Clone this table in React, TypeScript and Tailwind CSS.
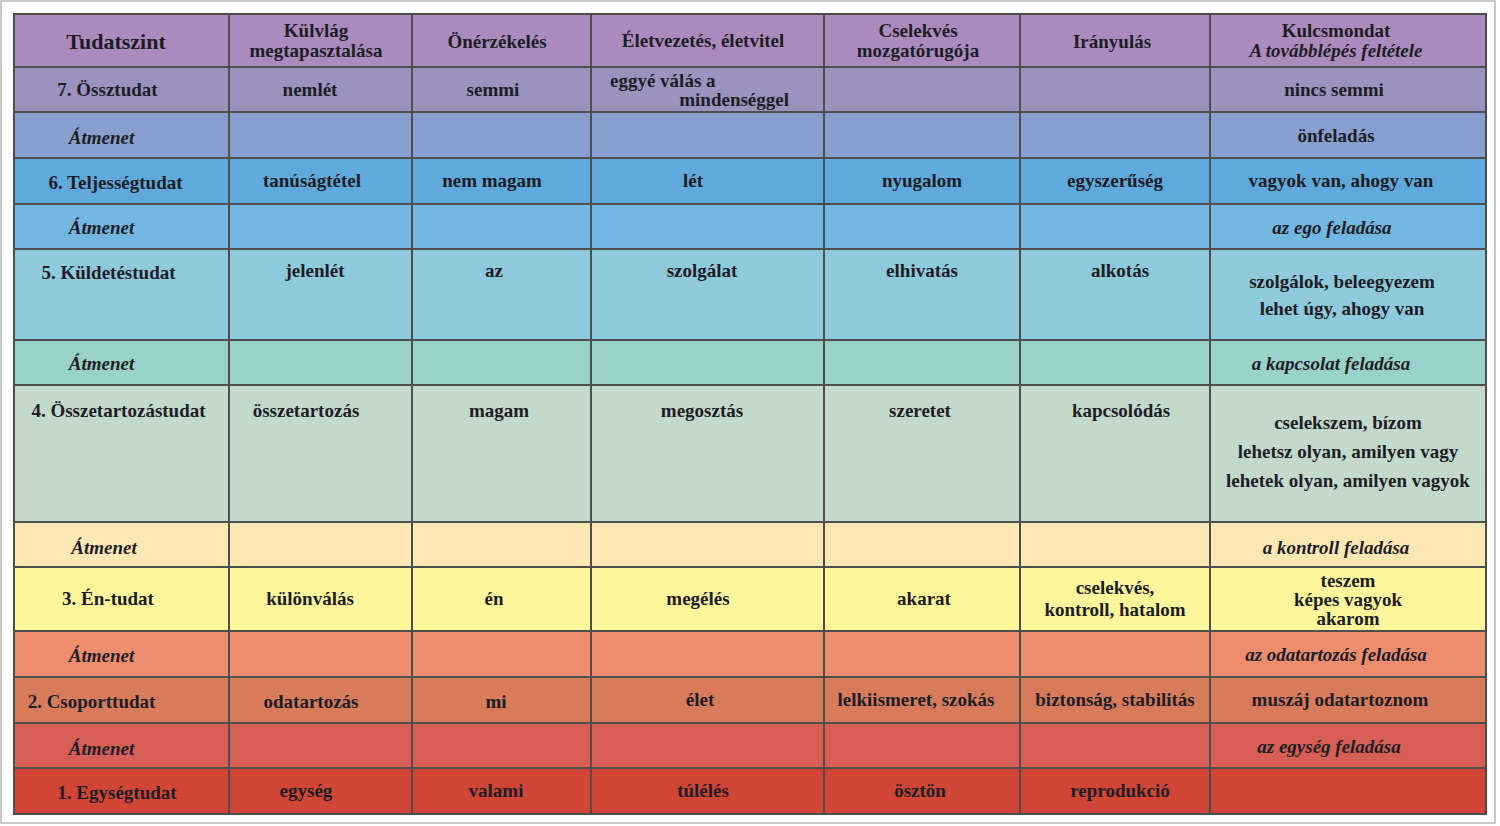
import React from "react";

type Cell = { t?: React.ReactNode; c?: string; v?: string };
type Row = { bg: string; v?: string; cells: Cell[] };

const A = (s: string) => <span className="italic">{s}</span>;

const rows: Row[] = [
  {
    bg: "bg-[#ab8bbd]",
    cells: [
      { t: "Tudatszint", c: "text-[22px] pr-[11px] pt-[2px]" },
      { t: <>Külvlág<br />megtapasztalása</>, c: "leading-[20px] pr-[9px]" },
      { t: "Önérzékelés", c: "pr-[9px] pt-[3px]" },
      { t: "Életvezetés, életvitel", c: "pr-[9px]" },
      { t: <>Cselekvés<br />mozgatórugója</>, c: "leading-[20px] pr-[8px]" },
      { t: "Irányulás", c: "pr-[6px] pt-[3px]" },
      { t: <>Kulcsmondat<br /><span className="italic">A továbblépés feltétele</span></>, c: "leading-[20px] pr-[24px]" },
    ],
  },
  {
    bg: "bg-[#9b92be]",
    cells: [
      { t: "7. Össztudat", c: "pr-[28px]" },
      { t: "nemlét", c: "pr-[21px]" },
      { t: "semmi", c: "pr-[17px]" },
      {
        t: (
          <div className="flex w-full flex-col leading-[19px]">
            <div className="pl-[18px] text-left">eggyé válás a</div>
            <div className="pr-[34px] text-right">mindenséggel</div>
          </div>
        ),
      },
      {},
      {},
      { t: "nincs semmi", c: "pr-[28px]" },
    ],
  },
  {
    bg: "bg-[#879ecf]",
    cells: [
      { t: A("Átmenet"), c: "pr-[40px] pt-[6px]" },
      {}, {}, {}, {}, {},
      { t: "önfeladás", c: "pr-[24px] pt-[2px]" },
    ],
  },
  {
    bg: "bg-[#5fa9dc]",
    cells: [
      { t: "6. Teljességtudat", c: "pr-[12px] pt-[4px]" },
      { t: "tanúságtétel", c: "pr-[17px]" },
      { t: "nem magam", c: "pr-[19px]" },
      { t: "lét", c: "pr-[29px]" },
      { t: "nyugalom" },
      { t: "egyszerűség" },
      { t: "vagyok van, ahogy van", c: "pr-[14px]" },
    ],
  },
  {
    bg: "bg-[#72b7e1]",
    cells: [
      { t: A("Átmenet"), c: "pr-[40px] pt-[2px]" },
      {}, {}, {}, {}, {},
      { t: A("az ego feladása"), c: "pr-[32px] pt-[2px]" },
    ],
  },
  {
    bg: "bg-[#8ecadc]",
    v: "justify-start pt-[10px]",
    cells: [
      { t: "5. Küldetéstudat", v: "justify-start pt-[12px]", c: "pr-[26px]" },
      { t: "jelenlét", c: "pr-[11px]" },
      { t: "az", c: "pr-[15px]" },
      { t: "szolgálat", c: "pr-[11px]" },
      { t: "elhivatás" },
      { t: "alkotás", c: "pl-[10px]" },
      { t: <>szolgálok, beleegyezem<br />lehet úgy, ahogy van</>, v: "justify-center", c: "leading-[27px] pr-[12px]" },
    ],
  },
  {
    bg: "bg-[#99d2c8]",
    cells: [
      { t: A("Átmenet"), c: "pr-[40px] pt-[3px]" },
      {}, {}, {}, {}, {},
      { t: A("a kapcsolat feladása"), c: "pr-[34px] pt-[3px]" },
    ],
  },
  {
    bg: "bg-[#c3d9cc]",
    v: "justify-start pt-[14px]",
    cells: [
      { t: "4. Összetartozástudat", c: "pr-[6px]" },
      { t: "összetartozás", c: "pr-[29px]" },
      { t: "magam", c: "pr-[5px]" },
      { t: "megosztás", c: "pr-[11px]" },
      { t: "szeretet", c: "pr-[4px]" },
      { t: "kapcsolódás", c: "pl-[12px]" },
      {
        t: <>cselekszem, bízom<br />lehetsz olyan, amilyen vagy<br />lehetek olyan, amilyen vagyok</>,
        v: "justify-center pb-[5px]",
        c: "leading-[29px]",
      },
    ],
  },
  {
    bg: "bg-[#fde8b3]",
    cells: [
      { t: A("Átmenet"), c: "pr-[35px] pt-[6px]" },
      {}, {}, {}, {}, {},
      { t: A("a kontroll feladása"), c: "pr-[24px] pt-[6px]" },
    ],
  },
  {
    bg: "bg-[#fdf69b]",
    cells: [
      { t: "3. Én-tudat", c: "pr-[27px]" },
      { t: "különválás", c: "pr-[21px]" },
      { t: "én", c: "pr-[15px]" },
      { t: "megélés", c: "pr-[19px]" },
      { t: "akarat", c: "pl-[4px]" },
      { t: <>cselekvés,<br />kontroll, hatalom</>, c: "leading-[22px]" },
      { t: <>teszem<br />képes vagyok<br />akarom</>, c: "leading-[19px]" },
    ],
  },
  {
    bg: "bg-[#ec8d6e]",
    cells: [
      { t: A("Átmenet"), c: "pr-[40px] pt-[4px]" },
      {}, {}, {}, {}, {},
      { t: A("az odatartozás feladása"), c: "pr-[24px] pt-[2px]" },
    ],
  },
  {
    bg: "bg-[#d87b5a]",
    cells: [
      { t: "2. Csoporttudat", c: "pr-[60px] pt-[4px]" },
      { t: "odatartozás", c: "pr-[19px] pt-[4px]" },
      { t: "mi", c: "pr-[11px] pt-[4px]" },
      { t: "élet", c: "pr-[15px]" },
      { t: "lelkiismeret, szokás", c: "pr-[12px]" },
      { t: "biztonság, stabilitás" },
      { t: "muszáj odatartoznom", c: "pr-[16px]" },
    ],
  },
  {
    bg: "bg-[#d65e55]",
    cells: [
      { t: A("Átmenet"), c: "pr-[40px] pt-[6px]" },
      {}, {}, {}, {}, {},
      { t: A("az egység feladása"), c: "pr-[38px] pt-[2px]" },
    ],
  },
  {
    bg: "bg-[#d04535]",
    cells: [
      { t: "1. Egységtudat", c: "pr-[9px] pt-[4px]" },
      { t: "egység", c: "pr-[29px]" },
      { t: "valami", c: "pr-[11px]" },
      { t: "túlélés", c: "pr-[9px]" },
      { t: "ösztön", c: "pr-[4px]" },
      { t: "reprodukció", c: "pl-[10px]" },
      {},
    ],
  },
];

export default function App() {
  return (
    <div className="h-[826px] w-[1500px] overflow-hidden bg-white">
      <div className="h-[824px] w-[1496px] border-2 border-[#c8c8c8] bg-white p-[11px]">
        <div className="grid w-[1474px] grid-cols-[213px_181px_177px_231px_194px_188px_274px] grid-rows-[51px_43px_44px_44px_43px_89px_43px_135px_43px_62px_44px_44px_43px_44px] gap-[2px] bg-[#4e4e4e] p-[2px] font-['Liberation_Serif','Times_New_Roman',serif] text-[19px] font-bold leading-[22px] text-[#1d1d26]">
          {rows.map((row, ri) =>
            row.cells.map((cell, ci) => (
              <div
                key={`${ri}-${ci}`}
                className={`${row.bg} flex flex-col items-center whitespace-nowrap text-center ${cell.v ?? row.v ?? "justify-center"} ${cell.c ?? ""}`}
              >
                {cell.t}
              </div>
            ))
          )}
        </div>
      </div>
    </div>
  );
}
